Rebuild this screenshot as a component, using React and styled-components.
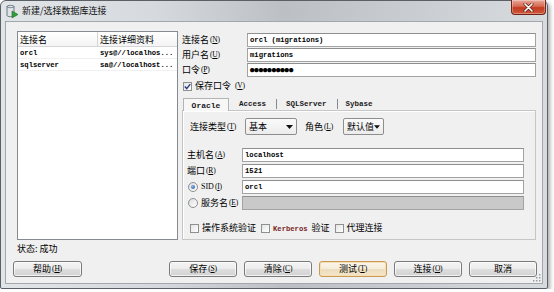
import React from 'react';
import styled, { createGlobalStyle } from 'styled-components';

const mono = `"Liberation Mono", "DejaVu Sans Mono", monospace`;
const cjk = `"Noto Sans CJK SC", "Liberation Sans", sans-serif`;

const GlobalStyle = createGlobalStyle`
  html, body {
    margin: 0;
    padding: 0;
    background: #ffffff;
  }
  body {
    font-family: ${cjk};
    font-size: 9px;
    color: #000;
  }
  * { box-sizing: border-box; }
`;

const Window = styled.div`
  width: 548px;
  height: 289px;
  border: 1px solid #5b6066;
  border-radius: 6px 6px 2px 2px;
  background: linear-gradient(90deg, #e2e5e8 0%, #d6d9dd 28%, #bcc0c5 52%, #c9cdd1 75%, #d8dbde 100%);
  box-shadow: 2px 2px 4px rgba(0, 0, 0, 0.35);
  display: flex;
  flex-direction: column;
`;

const TitleBar = styled.div`
  height: 20px;
  display: flex;
  align-items: center;
  padding-left: 4px;
`;

const TitleText = styled.span`
  margin-left: 3px;
  font-size: 9px;
  line-height: 12px;
  color: #111;
`;

const CloseButton = styled.div`
  margin-left: auto;
  margin-right: 1px;
  align-self: flex-start;
  margin-top: -1px;
  width: 35px;
  height: 15px;
  border: 1px solid #6e2416;
  border-top: none;
  border-radius: 0 0 4px 4px;
  background: linear-gradient(#e9a99a 0%, #d66a52 45%, #c23b1f 55%, #d0583b 100%);
  display: flex;
  align-items: center;
  justify-content: center;
  box-shadow: inset 0 0 0 1px rgba(255, 255, 255, 0.3);
`;

const Client = styled.div`
  flex: 1;
  margin: 0 4px 4px 4px;
  background: #f0f0f0;
  border: 1px solid #a1a7ad;
  padding-top: 9px;
  display: flex;
  flex-direction: column;
  position: relative;
`;

const Main = styled.div`
  display: flex;
  margin-left: 11px;
  height: 225px;
`;

const LeftCol = styled.div`
  width: 161px;
  display: flex;
  flex-direction: column;
`;

const ListBox = styled.div`
  height: 209px;
  border: 1px solid #868a91;
  background: #fff;
`;

const ListRow = styled.div`
  display: flex;
  height: ${p => (p.$head ? 15 : 12)}px;
  border-bottom: 1px solid ${p => (p.$head ? '#d5d5d5' : '#f0f0f0')};
  background: ${p => (p.$head ? 'linear-gradient(#ffffff, #f4f4f4)' : '#fff')};
  align-items: center;
`;

const ListCell = styled.div`
  width: ${p => p.$w}px;
  height: 100%;
  display: flex;
  align-items: center;
  padding-left: 2px;
  border-right: 1px solid ${p => (p.$head && p.$w === 80 ? '#d5d5d5' : 'transparent')};
  font-family: ${p => (p.$head ? cjk : mono)};
  font-size: ${p => (p.$head ? 9 : 7.2)}px;
  font-weight: ${p => (p.$head ? 400 : 700)};
  white-space: nowrap;
  overflow: hidden;
`;

const Status = styled.div`
  margin-top: 2px;
  line-height: 14px;
  font-size: 9px;
`;

const RightCol = styled.div`
  margin-left: 3px;
  width: 355px;
  padding-top: 1px;
  display: flex;
  flex-direction: column;
`;

const FieldRow = styled.div`
  display: flex;
  align-items: center;
  height: ${p => p.$h || 15}px;
  padding-left: ${p => p.$indent || 0}px;
`;

const Label = styled.div`
  width: ${p => p.$w}px;
  margin-left: ${p => p.$ml || 0}px;
  font-size: 9px;
  line-height: 12px;
  white-space: nowrap;
  display: flex;
  align-items: center;
`;

const Key = styled.span`
  font-family: "Liberation Serif", serif;
  font-size: 7.5px;
  margin-left: 1px;
  letter-spacing: -0.2px;
  & u { text-decoration-thickness: 0.5px; }
`;

const TextBox = styled.div`
  width: ${p => p.$w}px;
  height: 14px;
  border: 1px solid #a3a3a3;
  border-top-color: #8f8f8f;
  background: ${p => (p.$disabled ? '#c9c9c9' : '#ffffff')};
  font-family: ${mono};
  font-size: 7.2px;
  font-weight: 700;
  line-height: 12px;
  padding-left: 2px;
  white-space: nowrap;
  overflow: hidden;
`;

const Dots = styled.span`
  font-family: "DejaVu Sans Mono", monospace;
  font-size: 7.2px;
  font-weight: 400;
`;

const CheckRow = styled.div`
  display: flex;
  align-items: center;
  height: 12px;
  margin-top: ${p => p.$top || 0}px;
  padding-left: ${p => p.$indent || 0}px;
  gap: 5px;
`;

const CheckItem = styled.div`
  display: flex;
  align-items: center;
  gap: 3px;
  font-size: 9px;
  line-height: 12px;
  white-space: nowrap;
`;

const Box = styled.div`
  width: 9px;
  height: 9px;
  border: 1px solid #8e8f8f;
  background: linear-gradient(135deg, #e4e4e4, #ffffff);
  display: flex;
  align-items: center;
  justify-content: center;
`;

const MonoRed = styled.span`
  font-family: ${mono};
  font-weight: 700;
  font-size: 7.2px;
  color: #7a1e1e;
  margin-right: 4px;
`;

const TabStrip = styled.div`
  margin-top: 6px;
  height: 12px;
  display: flex;
  align-items: flex-end;
  padding-left: 2px;
`;

const Tab = styled.div`
  height: ${p => (p.$active ? 13 : 10)}px;
  display: flex;
  align-items: center;
  justify-content: center;
  font-family: ${mono};
  font-size: ${p => (p.$active ? 8 : 7.5)}px;
  font-weight: 700;
  color: #1a1a1a;
  ${p =>
    p.$active
      ? `
    width: 46px;
    border: 1px solid #b4b4b4;
    border-bottom: none;
    background: #f7f7f7;
    margin-bottom: -1px;
    position: relative;
  `
      : `
    padding: 0 ${p.$pr || 10}px 0 ${p.$pl || 10}px;
    border-left: ${p.$sep ? '1px solid #8a8a8a' : 'none'};
    margin-bottom: 1px;
  `}
`;

const Panel = styled.div`
  margin-left: 1px;
  width: 354px;
  height: 130px;
  border: 1px solid #c6c6c6;
  box-shadow: inset 1px 1px 0 #ffffff;
  padding-top: 7px;
  display: flex;
  flex-direction: column;
`;

const Select = styled.div`
  width: ${p => p.$w}px;
  height: 17px;
  border: 1px solid #8e8e8e;
  border-radius: 2px;
  background: linear-gradient(#fafafa, #ececec);
  display: flex;
  align-items: center;
  justify-content: space-between;
  padding: 0 3px 0 3px;
  font-size: 9px;
  line-height: 12px;
  white-space: nowrap;
  overflow: hidden;
`;

const HostBlock = styled.div`
  margin-top: 12px;
  display: flex;
  flex-direction: column;
`;

const Radio = styled.div`
  width: 10px;
  height: 10px;
  border-radius: 50%;
  border: 1px solid #8e8f8f;
  background: linear-gradient(135deg, #dcdcdc, #ffffff);
  display: flex;
  align-items: center;
  justify-content: center;
  margin-right: 2px;
  &::after {
    content: '';
    display: ${p => (p.$on ? 'block' : 'none')};
    width: 4px;
    height: 4px;
    border-radius: 50%;
    background: radial-gradient(circle at 35% 35%, #8fb3ea, #1f4f9e);
  }
`;

const RadioLabel = styled.div`
  display: flex;
  align-items: center;
  width: 42px;
  padding-left: 1px;
  font-size: 9px;
  line-height: 12px;
  white-space: nowrap;
`;

const SidText = styled.span`
  font-family: "Liberation Serif", serif;
  font-size: 8px;
`;

const ButtonRow = styled.div`
  margin-top: 5px;
  margin-left: 7px;
  display: flex;
  gap: 7px;
`;

const Button = styled.div`
  width: ${p => p.$w || 68}px;
  height: 16px;
  margin-right: ${p => p.$mr || 0}px;
  border: 1px solid ${p => (p.$focus ? '#c99a56' : '#7a7a7a')};
  border-radius: 3px;
  background: ${p =>
    p.$focus
      ? 'linear-gradient(#fbf6ec 0%, #f5ecd9 50%, #ecdcbc 51%, #f3e6cc 100%)'
      : 'linear-gradient(#f4f4f4 0%, #ececec 50%, #dedede 51%, #d2d2d2 100%)'};
  box-shadow: inset 0 0 0 1px ${p => (p.$focus ? '#f7dfb3' : 'rgba(255,255,255,0.7)')};
  display: flex;
  align-items: center;
  justify-content: center;
  font-size: 9px;
  line-height: 12px;
`;

const Grip = styled.svg`
  position: absolute;
  right: 1px;
  bottom: 1px;
`;

const M = ({ k }) => (
  <Key>
    (<u>{k}</u>)
  </Key>
);

function DbIcon() {
  return (
    <svg width="14" height="14" viewBox="0 0 14 14">
      <path d="M2 2.5 C2 1 9 1 9 2.5 V11.5 C9 13 2 13 2 11.5 Z" fill="#dfe3e8" stroke="#5f6b78" strokeWidth="0.9" />
      <path d="M2 2.5 C2 4 9 4 9 2.5" fill="none" stroke="#5f6b78" strokeWidth="0.8" />
      <polygon points="7,7 13,10.5 7,14" fill="#2f9e3a" stroke="#1d6b24" strokeWidth="0.6" />
    </svg>
  );
}

function Check() {
  return (
    <svg width="7" height="7" viewBox="0 0 7 7">
      <path d="M0.8 3.6 L2.7 5.6 L6.3 1.1" fill="none" stroke="#233f82" strokeWidth="1.4" />
    </svg>
  );
}

function Arrow() {
  return (
    <svg width="7" height="4" viewBox="0 0 7 4">
      <polygon points="0,0 7,0 3.5,4" fill="#111" />
    </svg>
  );
}

export default function App() {
  return (
    <>
      <GlobalStyle />
      <Window>
        <TitleBar>
          <DbIcon />
          <TitleText>新建/选择数据库连接</TitleText>
          <CloseButton>
            <svg width="11" height="9" viewBox="0 0 11 9">
              <path d="M2 1 L9 8 M9 1 L2 8" stroke="#5a1a10" strokeWidth="3" strokeLinecap="round" />
              <path d="M2 1 L9 8 M9 1 L2 8" stroke="#ffffff" strokeWidth="1.7" strokeLinecap="round" />
            </svg>
          </CloseButton>
        </TitleBar>
        <Client>
          <Main>
            <LeftCol>
              <ListBox>
                <ListRow $head>
                  <ListCell $head $w={80}>连接名</ListCell>
                  <ListCell $head $w={79}>连接详细资料</ListCell>
                </ListRow>
                <ListRow>
                  <ListCell $w={80}>orcl</ListCell>
                  <ListCell $w={79}>sys@//localhos...</ListCell>
                </ListRow>
                <ListRow>
                  <ListCell $w={80}>sqlserver</ListCell>
                  <ListCell $w={79}>sa@//localhost...</ListCell>
                </ListRow>
              </ListBox>
              <Status>状态: 成功</Status>
            </LeftCol>
            <RightCol>
              <FieldRow $indent={1}>
                <Label $w={65}>连接名<M k="N" /></Label>
                <TextBox $w={289}>orcl (migrations)</TextBox>
              </FieldRow>
              <FieldRow $indent={1}>
                <Label $w={65}>用户名<M k="U" /></Label>
                <TextBox $w={289}>migrations</TextBox>
              </FieldRow>
              <FieldRow $indent={1}>
                <Label $w={65}>口令<M k="P" /></Label>
                <TextBox $w={289}><Dots>●●●●●●●●●●</Dots></TextBox>
              </FieldRow>
              <CheckRow $top={3} $indent={2}>
                <CheckItem>
                  <Box><Check /></Box>
                  保存口令<M k="V" />
                </CheckItem>
              </CheckRow>
              <TabStrip>
                <Tab $active>Oracle</Tab>
                <Tab>Access</Tab>
                <Tab $sep $pl={9}>SQLServer</Tab>
                <Tab $sep $pl={8}>Sybase</Tab>
              </TabStrip>
              <Panel>
                <FieldRow $h={17} $indent={7}>
                  <Label $w={55}>连接类型<M k="T" /></Label>
                  <Select $w={52}>基本<Arrow /></Select>
                  <Label $w={38} $ml={8}>角色<M k="L" /></Label>
                  <Select $w={41}>默认值<Arrow /></Select>
                </FieldRow>
                <HostBlock>
                  <FieldRow $h={16} $indent={4}>
                    <Label $w={55}>主机名<M k="A" /></Label>
                    <TextBox $w={282}>localhost</TextBox>
                  </FieldRow>
                  <FieldRow $h={16} $indent={4}>
                    <Label $w={55}>端口<M k="R" /></Label>
                    <TextBox $w={282}>1521</TextBox>
                  </FieldRow>
                  <FieldRow $h={16} $indent={5}>
                    <Radio $on />
                    <RadioLabel><SidText>SID</SidText><M k="I" /></RadioLabel>
                    <TextBox $w={282}>orcl</TextBox>
                  </FieldRow>
                  <FieldRow $h={16} $indent={5}>
                    <Radio />
                    <RadioLabel>服务名<M k="E" /></RadioLabel>
                    <TextBox $w={282} $disabled />
                  </FieldRow>
                </HostBlock>
                <CheckRow $top={11} $indent={7}>
                  <CheckItem>
                    <Box />
                    操作系统验证
                  </CheckItem>
                  <CheckItem>
                    <Box />
                    <span><MonoRed>Kerberos</MonoRed>验证</span>
                  </CheckItem>
                  <CheckItem>
                    <Box />
                    代理连接
                  </CheckItem>
                </CheckRow>
              </Panel>
            </RightCol>
          </Main>
          <ButtonRow>
            <Button $w={69} $mr={80}>帮助<M k="H" /></Button>
            <Button>保存<M k="S" /></Button>
            <Button>清除<M k="C" /></Button>
            <Button $focus>测试<M k="T" /></Button>
            <Button>连接<M k="O" /></Button>
            <Button>取消</Button>
          </ButtonRow>
          <Grip width="9" height="9" viewBox="0 0 9 9">
            {[[7, 1], [7, 4], [4, 4], [7, 7], [4, 7], [1, 7]].map(([x, y]) => (
              <rect key={`${x}-${y}`} x={x} y={y} width="1.5" height="1.5" fill="#9a9ea3" />
            ))}
          </Grip>
        </Client>
      </Window>
    </>
  );
}
